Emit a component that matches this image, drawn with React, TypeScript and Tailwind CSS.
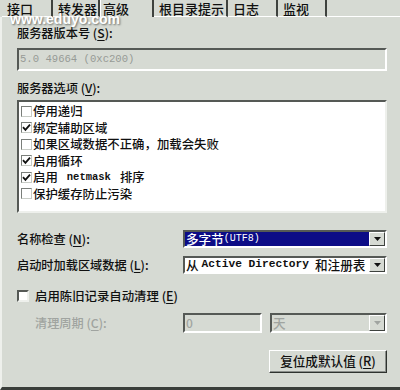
import React from "react";

const Check = () => (
  <svg width="9" height="9" viewBox="0 0 9 9" className="block">
    <path d="M1 4.2 L3.4 6.8 L8 1.6" fill="none" stroke="#111" strokeWidth="1.8" />
  </svg>
);

const ListItem = ({ checked, children }: { checked?: boolean; children: React.ReactNode }) => (
  <div className="flex h-[16.5px] items-center">
    <div className="flex h-[11px] w-[11px] items-center justify-center border border-t-[#7a7e7a] border-l-[#7a7e7a] border-r-[#c8ccc6] border-b-[#c8ccc6] bg-white">
      {checked ? <Check /> : null}
    </div>
    <span className="ml-[1px] flex items-center text-[12.4px] leading-none whitespace-nowrap">{children}</span>
  </div>
);

const Arrow = ({ disabled }: { disabled?: boolean }) => (
  <div className="flex h-full w-[16px] items-center justify-center border border-t-white border-l-white border-r-[#3e423e] border-b-[#3e423e] bg-[#d6dad3]">
    <svg width="7" height="4" viewBox="0 0 7 4" className="block">
      <polygon points="0,0 7,0 3.5,4" fill={disabled ? "#a0a4a0" : "#111"} />
    </svg>
  </div>
);

const U = ({ children }: { children: React.ReactNode }) => <span className="underline underline-offset-2">{children}</span>;

const tabs = [
  { t: "接口", w: "w-[51px]" },
  { t: "转发器", w: "w-[47px]" },
  { t: "高级", w: "w-[54px]", sel: true },
  { t: "根目录提示", w: "w-[74px]" },
  { t: "日志", w: "w-[50px]" },
  { t: "监视", w: "w-[49px]" },
];

export default function App() {
  return (
    <div className="relative h-[390px] w-[400px] overflow-hidden bg-[#d6dad3] font-['Noto_Sans_CJK_SC',sans-serif] font-medium text-[#101010]">
      {/* tab row */}
      <div className="flex h-[17px] pl-[2px]">
        {tabs.map((tb) =>
          tb.sel ? (
            <div key={tb.t} className={`${tb.w} flex h-full items-center border-l border-l-white border-r-2 border-r-[#3e423e] pl-[2px] text-[13px] leading-none`}>
              {tb.t}
            </div>
          ) : (
            <div key={tb.t} className={`${tb.w} flex h-full items-center border-b border-b-white border-r-2 border-r-[#3e423e] pl-[5px] text-[13px] leading-none`}>
              {tb.t}
            </div>
          )
        )}
        <div className="h-full flex-1 border-b border-b-white" />
      </div>

      {/* panel */}
      <div className="flex h-[373px] flex-col border-l-2 border-l-[#eef0ec] border-b-[3px] border-b-[#3a3e3a] pl-[15px] pr-[13px]">
        <div className="mt-[8px] h-[16px] text-[12.2px] leading-[16px]">
          服务器版本号 (<U>S</U>):
        </div>
        <div className="mt-[7px] flex h-[23px] items-center border-2 border-t-[#555955] border-l-[#555955] border-r-white border-b-white bg-[#d6dad3] pl-[1px] font-['Liberation_Mono',monospace] text-[10.6px] font-normal text-[#969a96]">
          5.0 49664 (0xc200)
        </div>

        <div className="mt-[9px] h-[16px] text-[12.2px] leading-[16px]">
          服务器选项 (<U>V</U>):
        </div>
        <div className="mt-[4px] flex h-[113px] flex-col border-2 border-t-[#555955] border-l-[#555955] border-r-[#eef0ec] border-b-[#eef0ec] bg-white pl-[2px] pt-[1px]">
          <ListItem>停用递归</ListItem>
          <ListItem checked>绑定辅助区域</ListItem>
          <ListItem>如果区域数据不正确，加载会失败</ListItem>
          <ListItem checked>启用循环</ListItem>
          <ListItem checked>
            启用<span className="mx-[9px] font-['Liberation_Mono',monospace] text-[10.5px] font-bold">netmask</span>排序
          </ListItem>
          <ListItem>保护缓存防止污染</ListItem>
        </div>

        {/* name check */}
        <div className="mt-[17px] flex h-[18px] items-center">
          <div className="w-[166px] text-[12.2px] leading-none">
            名称检查 (<U>N</U>):
          </div>
          <div className="flex h-full flex-1 border-2 border-t-[#555955] border-l-[#555955] border-r-white border-b-white bg-white">
            <div className="flex flex-1 items-center bg-[#0c0c86] pl-[1px] text-[12.6px] leading-none text-white">
              多字节<span className="font-['Liberation_Mono',monospace] text-[10px]">(UTF8)</span>
            </div>
            <Arrow />
          </div>
        </div>

        {/* zone load */}
        <div className="mt-[8px] flex h-[18px] items-center">
          <div className="w-[166px] text-[12.2px] leading-none">
            启动时加载区域数据 (<U>L</U>):
          </div>
          <div className="flex h-full flex-1 border-2 border-t-[#555955] border-l-[#555955] border-r-white border-b-white bg-white">
            <div className="flex flex-1 items-center whitespace-nowrap pl-[1px] text-[12.6px] leading-none">
              从<span className="ml-[3px] mr-[6px] font-['Liberation_Mono',monospace] text-[11.2px] font-bold">Active Directory</span>和注册表
            </div>
            <Arrow />
          </div>
        </div>

        {/* scavenging */}
        <div className="mt-[14px] flex h-[16px] items-center">
          <div className="h-[12px] w-[12px] border-2 border-t-[#555955] border-l-[#555955] border-r-[#eef0ec] border-b-[#eef0ec] bg-white" />
          <span className="ml-[6px] text-[12.4px] leading-none">
            启用陈旧记录自动清理 (<U>E</U>)
          </span>
        </div>

        <div className="mt-[9px] flex h-[20px] items-center">
          <div className="w-[166px] pl-[18px] text-[12.2px] leading-none text-[#a0a4a0]">
            清理周期 (<U>C</U>):
          </div>
          <div className="flex h-full w-[79px] items-center border-2 border-t-[#555955] border-l-[#555955] border-r-white border-b-white pl-[1px] text-[12px] leading-none text-[#a0a4a0]">
            0
          </div>
          <div className="ml-[8px] flex h-full flex-1 border-2 border-t-[#555955] border-l-[#555955] border-r-white border-b-white">
            <div className="flex flex-1 items-center pl-[1px] text-[12.6px] leading-none text-[#a0a4a0]">天</div>
            <Arrow disabled />
          </div>
        </div>

        <div className="mt-[17px] flex justify-end">
          <div className="flex h-[23px] w-[118px] items-center justify-center border border-t-white border-l-white border-r-[#2e322e] border-b-[#2e322e] shadow-[inset_-1px_-1px_0_#8a8e8a] text-[12.6px] leading-none">
            复位成默认值 (<U>R</U>)
          </div>
        </div>
      </div>

      {/* watermark overlay */}
      <div className="pointer-events-none absolute left-[10px] top-[12px] font-['Liberation_Sans',sans-serif] text-[14px] font-bold leading-none text-white [text-shadow:1px_1px_2px_#6a6e6a]">
        www.eduyo.com
      </div>
    </div>
  );
}
